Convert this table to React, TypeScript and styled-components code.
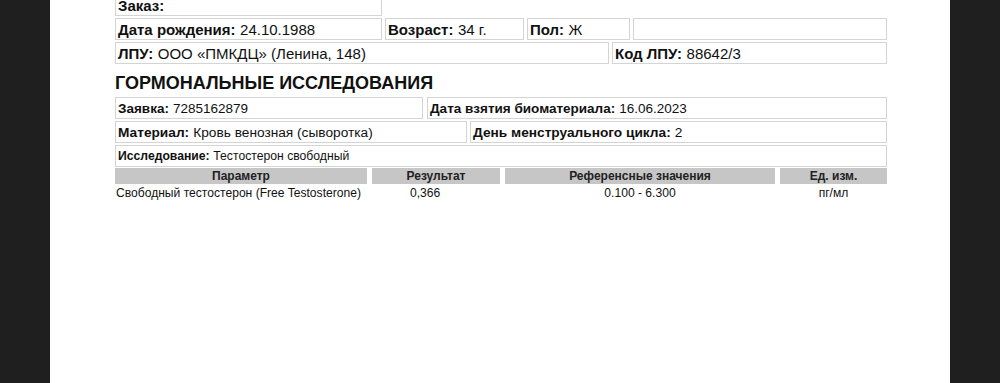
import React from "react";
import styled, { createGlobalStyle } from "styled-components";

const Global = createGlobalStyle`
  html, body { margin: 0; padding: 0; background: #1f1f1f; }
  body { font-family: "Liberation Sans", Arial, sans-serif; color: #111; }
`;

const Sheet = styled.div`
  width: 900px;
  height: 383px;
  margin: 0 auto;
  background: #fff;
  overflow: hidden;
`;

const Content = styled.div`
  width: 772px;
  margin: -6px 0 0 65px;
  display: flex;
  flex-direction: column;
`;

const Rows = styled.div<{ $gap: number }>`
  display: flex;
  flex-direction: column;
  gap: ${(p) => p.$gap}px;
`;

const Row = styled.div<{ $gap?: number }>`
  display: flex;
  gap: ${(p) => p.$gap ?? 3}px;
`;

const Field = styled.div<{ $w?: number; $size: number }>`
  box-sizing: border-box;
  height: 22px;
  ${(p) => (p.$w ? `width: ${p.$w}px; flex: none;` : "flex: 1;")}
  border: 1px solid #d4d4d4;
  display: flex;
  align-items: center;
  padding: 0 2px;
  font-size: ${(p) => p.$size}px;
  white-space: nowrap;
  overflow: hidden;
`;

const Label = styled.b`
  font-weight: 700;
  margin-right: 0.3em;
`;

const Heading = styled.h2`
  margin: 9px 0 4px;
  font-size: 18px;
  line-height: 20px;
  font-weight: 700;
`;

const Table = styled.div`
  margin-top: 1px;
  display: grid;
  grid-template-columns: 252px 128px 270px 107px;
  column-gap: 5px;
  font-size: 12px;
`;

const HeadCell = styled.div`
  background: #c6c6c6;
  height: 16px;
  line-height: 16px;
  text-align: center;
  font-weight: 700;
  color: #222;
`;

const Cell = styled.div<{ $align: "left" | "center"; $indent?: number }>`
  height: 18px;
  line-height: 18px;
  font-size: 12.1px;
  text-align: ${(p) => p.$align};
  padding-left: ${(p) => p.$indent ?? 0}px;
  white-space: nowrap;
`;

type F = { label: string; value?: string; w?: number };

const patientRows: F[][] = [
  [{ label: "Заказ:", w: 267 }],
  [
    { label: "Дата рождения:", value: "24.10.1988", w: 267 },
    { label: "Возраст:", value: "34 г.", w: 139 },
    { label: "Пол:", value: "Ж", w: 103 },
    { label: "" },
  ],
  [
    { label: "ЛПУ:", value: "ООО «ПМКДЦ» (Ленина, 148)", w: 494 },
    { label: "Код ЛПУ:", value: "88642/3" },
  ],
];

const orderRows: F[][] = [
  [
    { label: "Заявка:", value: "7285162879", w: 308 },
    { label: "Дата взятия биоматериала:", value: "16.06.2023" },
  ],
  [
    { label: "Материал:", value: "Кровь венозная (сыворотка)", w: 352 },
    { label: "День менструального цикла:", value: "2" },
  ],
];

const renderRow = (row: F[], size: number, gap = 3) => (
  <Row $gap={gap}>
    {row.map((f, i) => (
      <Field key={i} $w={f.w} $size={size}>
        {f.label && <Label>{f.label}</Label>}
        {f.value}
      </Field>
    ))}
  </Row>
);

export default function App() {
  return (
    <>
      <Global />
      <Sheet>
        <Content>
          <Rows $gap={2}>
            {patientRows.map((r, i) => (
              <React.Fragment key={i}>{renderRow(r, 15)}</React.Fragment>
            ))}
          </Rows>
          <Heading>ГОРМОНАЛЬНЫЕ ИССЛЕДОВАНИЯ</Heading>
          <Rows $gap={2}>
            {renderRow(orderRows[0], 13.5, 4)}
            {renderRow(orderRows[1], 13.7)}
            <Row>
              <Field $size={12.2}>
                <Label>Исследование:</Label>Тестостерон свободный
              </Field>
            </Row>
          </Rows>
          <Table>
            <HeadCell>Параметр</HeadCell>
            <HeadCell>Результат</HeadCell>
            <HeadCell>Референсные значения</HeadCell>
            <HeadCell>Ед. изм.</HeadCell>
            <Cell $align="left" $indent={1}>Свободный тестостерон (Free Testosterone)</Cell>
            <Cell $align="left" $indent={38}>0,366</Cell>
            <Cell $align="center">0.100 - 6.300</Cell>
            <Cell $align="center">пг/мл</Cell>
          </Table>
        </Content>
      </Sheet>
    </>
  );
}
